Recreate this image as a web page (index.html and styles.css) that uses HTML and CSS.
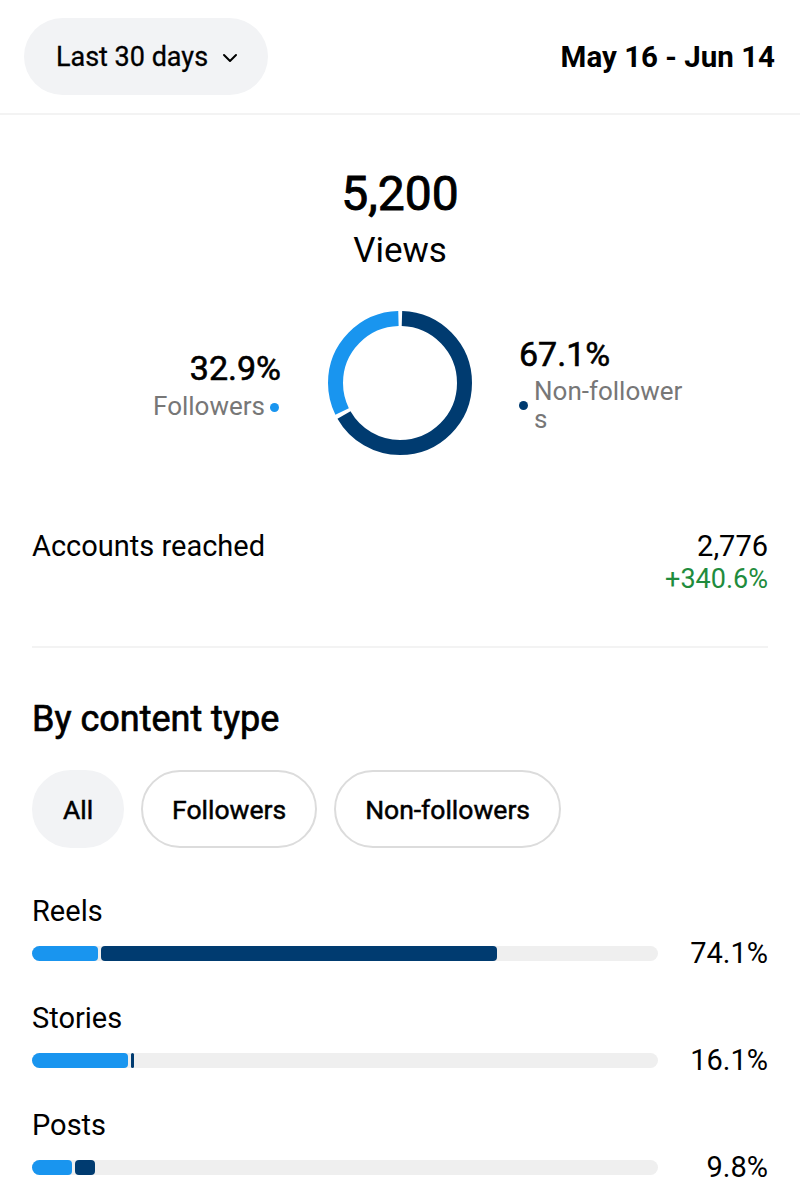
FILE: index.html
```html
<!DOCTYPE html>
<html>
<head>
<meta charset="utf-8">
<link rel="stylesheet" href="styles.css">
</head>
<body>
<header class="topbar">
  <button class="range-pill">Last 30 days
    <svg class="chev" width="16" height="10" viewBox="0 0 16 10"><path d="M2 2 L8 8 L14 2" fill="none" stroke="#000" stroke-width="2" stroke-linecap="round" stroke-linejoin="round"/></svg>
  </button>
  <div class="daterange">May 16 - Jun 14</div>
</header>

<section class="summary">
  <div class="big">5,200</div>
  <div class="big-label">Views</div>
  <div class="donut-row">
    <div class="side left">
      <div class="pct">32.9%</div>
      <div class="legend"><span>Followers</span><i class="dot light"></i></div>
    </div>
    <svg class="donut" width="144" height="144" viewBox="0 0 144 144">
      <g transform="rotate(-90 72 72)">
        <circle cx="72" cy="72" r="64.5" fill="none" stroke="#003b70" stroke-width="15" stroke-dasharray="268 500" stroke-dashoffset="-2"/>
        <circle cx="72" cy="72" r="64.5" fill="none" stroke="#1995ef" stroke-width="15" stroke-dasharray="129 500" stroke-dashoffset="-274"/>
      </g>
    </svg>
    <div class="side right">
      <div class="pct">67.1%</div>
      <div class="legend"><i class="dot dark"></i><span class="wrap">Non-followers</span></div>
    </div>
  </div>
</section>

<section class="reach">
  <div class="reach-label">Accounts reached</div>
  <div class="reach-vals">
    <div class="reach-num">2,776</div>
    <div class="reach-delta">+340.6%</div>
  </div>
</section>

<section class="content">
  <h2 class="section-title">By content type</h2>
  <div class="filters">
    <button class="chip active">All</button>
    <button class="chip">Followers</button>
    <button class="chip">Non-followers</button>
  </div>

  <div class="metric">
    <div class="metric-label">Reels</div>
    <div class="metric-row">
      <div class="track">
        <span class="seg light" style="width:66px"></span>
        <span class="seg dark" style="width:396px"></span>
      </div>
      <div class="metric-pct">74.1%</div>
    </div>
  </div>
  <div class="metric">
    <div class="metric-label">Stories</div>
    <div class="metric-row">
      <div class="track">
        <span class="seg light" style="width:96px"></span>
        <span class="seg dark" style="width:3px"></span>
      </div>
      <div class="metric-pct">16.1%</div>
    </div>
  </div>
  <div class="metric">
    <div class="metric-label">Posts</div>
    <div class="metric-row">
      <div class="track">
        <span class="seg light" style="width:40px"></span>
        <span class="seg dark" style="width:20px"></span>
      </div>
      <div class="metric-pct">9.8%</div>
    </div>
  </div>
</section>
</body>
</html>
```

FILE: styles.css
```css
* { box-sizing: border-box; }
body {
  margin: 0;
  background: #fff;
  font-family: Roboto, "Liberation Sans", Arial, sans-serif;
  color: #000;
}
.topbar {
  display: flex;
  align-items: center;
  justify-content: space-between;
  padding: 18px 25px 18px 24px;
  border-bottom: 2px solid #f3f3f3;
}
.range-pill {
  height: 77px;
  width: 244px;
  border: none;
  border-radius: 39px;
  background: #f2f3f5;
  font-family: inherit;
  font-size: 27px;
  font-weight: 400;
  -webkit-text-stroke: 0.3px #000;
  color: #000;
  display: flex;
  align-items: center;
  justify-content: center;
  gap: 14px;
  padding: 0 0 0 2px;
}
.chev { margin-top: 2px; }
.daterange {
  font-size: 29.5px;
  font-weight: 700;
}
.summary {
  display: flex;
  flex-direction: column;
  align-items: center;
  padding-top: 51px;
}
.big {
  font-size: 48px;
  font-weight: 400;
  -webkit-text-stroke: 0.9px #000;
  line-height: 56px;
}
.big-label {
  font-size: 35px;
  line-height: 40px;
  margin-top: 9px;
}
.donut-row {
  display: grid;
  grid-template-columns: 1fr auto 1fr;
  column-gap: 47px;
  align-items: start;
  margin-top: 40px;
  width: 100%;
}
.side.left { text-align: right; padding-top: 37px; }
.side.right { padding-top: 23px; }
.pct {
  font-size: 34px;
  font-weight: 400;
  -webkit-text-stroke: 0.6px #000;
  line-height: 40px;
}
.legend {
  display: flex;
  font-size: 26px;
  color: #777;
}
.left .legend { justify-content: flex-end; align-items: center; line-height: 30px; margin-top: 3px; }
.right .legend { align-items: flex-start; line-height: 28px; margin-top: 3px; }
.legend .wrap { width: 156px; word-break: break-all; }
.dot {
  display: inline-block;
  width: 9px;
  height: 9px;
  border-radius: 50%;
  flex: none;
}
.left .dot { margin-left: 5px; margin-right: 2px; margin-top: 2px; }
.right .dot { margin-right: 6px; margin-top: 24px; }
.dot.light { background: #1995ef; }
.dot.dark { background: #003b70; }
.reach {
  display: flex;
  justify-content: space-between;
  margin: 74px 32px 0;
  padding-bottom: 51px;
  border-bottom: 2px solid #f3f3f3;
}
.reach-label { font-size: 29px; line-height: 34px; }
.reach-vals { text-align: right; }
.reach-num { font-size: 29px; line-height: 34px; }
.reach-delta { font-size: 27px; line-height: 32px; color: #1f8c3d; }
.content { padding: 0 32px; }
.section-title {
  margin: 50px 0 0;
  font-size: 36px;
  font-weight: 400;
  -webkit-text-stroke: 0.7px #000;
  line-height: 42px;
}
.filters {
  display: flex;
  gap: 17px;
  margin-top: 30px;
}
.chip {
  height: 78px;
  border-radius: 39px;
  border: 2px solid #dcdcdc;
  background: #fff;
  font-family: inherit;
  font-size: 26.5px;
  font-weight: 400;
  -webkit-text-stroke: 0.5px #000;
  color: #000;
  padding: 0 29px;
}
.chip.active { background: #f2f3f5; border-color: #f2f3f5; width: 92px; padding: 0; }
.metric { margin-top: 31px; }
.filters + .metric { margin-top: 46px; }
.metric-label { font-size: 29px; line-height: 34px; }
.metric-row {
  display: flex;
  align-items: center;
  justify-content: space-between;
  margin-top: 8px;
  height: 34px;
}
.track {
  width: 626px;
  height: 15px;
  background: #efefef;
  border-radius: 8px;
  display: flex;
  gap: 3px;
  overflow: hidden;
}
.seg { height: 100%; border-radius: 4px; }
.seg.light { background: #1995ef; }
.seg.dark { background: #003b70; }
.metric-pct { font-size: 29px; line-height: 34px; }
```
